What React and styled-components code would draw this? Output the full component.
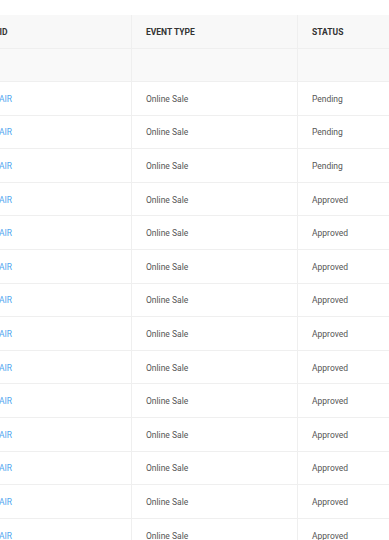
import styled, { createGlobalStyle } from "styled-components";

const GlobalStyle = createGlobalStyle`
  html, body {
    margin: 0;
    padding: 0;
    background: #fff;
    font-family: Roboto, "Liberation Sans", sans-serif;
    overflow: hidden;
  }
`;

// the grid is scrolled sideways: the first column starts off-screen
const Page = styled.div`
  padding-top: 15px;
  overflow: hidden;
`;

const Table = styled.div`
  margin-left: -75px;
  width: 560px;
`;

const Row = styled.div`
  display: grid;
  grid-template-columns: 207px 166px 1fr;
  height: ${(p) => p.$h || "33.6px"};
  background: ${(p) => p.$bg || "#fff"};
  border-bottom: 1px solid #efefef;
  box-sizing: border-box;
`;

const Cell = styled.div`
  display: flex;
  align-items: center;
  padding: 1px 14px 0;
  border-right: 1px solid #efefef;
  font-size: 8.5px;
  color: #555;
  white-space: nowrap;
  overflow: hidden;
`;

const HeadCell = styled(Cell)`
  padding-top: 0;
  font-weight: 700;
  color: #333;
  text-transform: uppercase;
`;

const Link = styled.a`
  color: #4fa6ef;
  text-decoration: none;
`;

const rows = [
  "Pending",
  "Pending",
  "Pending",
  "Approved",
  "Approved",
  "Approved",
  "Approved",
  "Approved",
  "Approved",
  "Approved",
  "Approved",
  "Approved",
  "Approved",
  "Approved",
];

export default function App() {
  return (
    <Page>
      <GlobalStyle />
      <Table>
        <Row $h="34px" $bg="#f8f8f8">
          <HeadCell>Transaction ID</HeadCell>
          <HeadCell>Event Type</HeadCell>
          <HeadCell>Status</HeadCell>
        </Row>
        <Row $h="33px" $bg="#f9f9f9">
          <Cell />
          <Cell />
          <Cell />
        </Row>
        {rows.map((status, i) => (
          <Row key={i}>
            <Cell>
              <Link href="#">TXN-88410-REPAIR</Link>
            </Cell>
            <Cell>Online Sale</Cell>
            <Cell>{status}</Cell>
          </Row>
        ))}
      </Table>
    </Page>
  );
}
